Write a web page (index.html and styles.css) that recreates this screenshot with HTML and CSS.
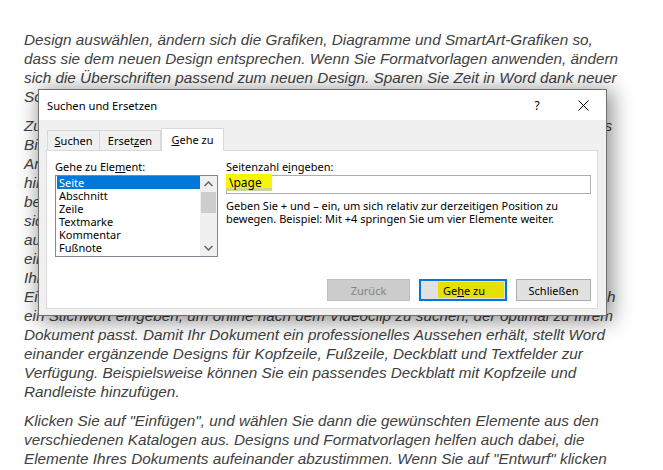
FILE: index.html
```html
<!DOCTYPE html>
<html lang="de">
<head>
<meta charset="utf-8">
<title>Suchen und Ersetzen</title>
<link rel="stylesheet" href="styles.css">
</head>
<body>
<div class="doc">
  <p>Design auswählen, ändern sich die Grafiken, Diagramme und SmartArt-Grafiken so,<br>dass sie dem neuen Design entsprechen. Wenn Sie Formatvorlagen anwenden, ändern<br>sich die Überschriften passend zum neuen Design. Sparen Sie Zeit in Word dank neuer<br>Schaltflächen, die angezeigt werden, wo Sie sie benötigen.</p>
  <p>Zum Ändern der Weise, in der sich ein Bild in Ihr Dokument einfügt, klicken Sie auf das<br>Bild. Dann wird eine Schaltfläche für Layoutoptionen neben dem Bild angezeigt. Beim<br>Arbeiten an einer Tabelle klicken Sie an die Position, an der Sie eine Zeile oder Spalte<br>hinzufügen möchten, und klicken Sie dann auf das Pluszeichen. Auch das Lesen ist<br>bequemer in der neuen Leseansicht. Sie können Teile des Dokuments reduzieren und<br>sich auf den gewünschten Text konzentrieren. Wenn Sie vor dem Ende zu lesen<br>aufhören müssen, merkt sich Word die Stelle, bis zu der Sie gelangt sind – sogar auf<br>einem anderen Gerät. Video bietet eine leistungsstarke Möglichkeit zur Unterstützung<br>Ihres Standpunkts. Wenn Sie auf "Onlinevideo" klicken, können Sie den<br>Einbettungscode für das Video einfügen, das hinzugefügt werden soll. Sie können auch<br>ein Stichwort eingeben, um online nach dem Videoclip zu suchen, der optimal zu Ihrem<br>Dokument passt. Damit Ihr Dokument ein professionelles Aussehen erhält, stellt Word<br>einander ergänzende Designs für Kopfzeile, Fußzeile, Deckblatt und Textfelder zur<br>Verfügung. Beispielsweise können Sie ein passendes Deckblatt mit Kopfzeile und<br>Randleiste hinzufügen.</p>
  <p>Klicken Sie auf "Einfügen", und wählen Sie dann die gewünschten Elemente aus den<br>verschiedenen Katalogen aus. Designs und Formatvorlagen helfen auch dabei, die<br>Elemente Ihres Dokuments aufeinander abzustimmen. Wenn Sie auf "Entwurf" klicken</p>
</div>

<div class="dialog">
  <div class="titlebar">
    <span class="title">Suchen und Ersetzen</span>
    <span class="help">?</span>
    <svg class="close" width="11" height="11" viewBox="0 0 11 11"><path d="M0.5 0.5 L10.5 10.5 M10.5 0.5 L0.5 10.5" stroke="#000" stroke-width="1" fill="none"/></svg>
  </div>
  <div class="body">
    <div class="tabs">
      <div class="tab tab-suchen"><u>S</u>uchen</div>
      <div class="tab tab-ersetzen">Erset<u>z</u>en</div>
      <div class="tab tab-active"><u>G</u>ehe zu</div>
    </div>
    <div class="panel">
      <div class="fields">
        <div class="col-left">
          <div class="label">Gehe zu Ele<u>m</u>ent:</div>
          <div class="listbox">
            <ul class="items">
              <li class="selected">Seite</li>
              <li>Abschnitt</li>
              <li>Zeile</li>
              <li>Textmarke</li>
              <li>Kommentar</li>
              <li>Fußnote</li>
            </ul>
            <div class="scrollbar">
              <svg class="arrow" width="17" height="16" viewBox="0 0 17 16"><path d="M4.5 10 L8.5 6 L12.5 10" stroke="#606060" stroke-width="1.4" fill="none"/></svg>
              <div class="thumb"></div>
              <div class="track"></div>
              <svg class="arrow" width="17" height="16" viewBox="0 0 17 16"><path d="M4.5 6 L8.5 10 L12.5 6" stroke="#606060" stroke-width="1.4" fill="none"/></svg>
            </div>
          </div>
        </div>
        <div class="col-right">
          <div class="label">Seitenzahl e<u>i</u>ngeben:</div>
          <div class="input"><span class="mark">\page</span></div>
          <p class="hint">Geben Sie + und – ein, um sich relativ zur derzeitigen Position zu<br>bewegen. Beispiel: Mit +4 springen Sie um vier Elemente weiter.</p>
        </div>
      </div>
      <div class="buttons">
        <button class="btn btn-back" disabled>Zurück</button>
        <button class="btn btn-go"><span class="go-mark">Ge<u>h</u>e zu</span></button>
        <button class="btn btn-close">Schließen</button>
      </div>
    </div>
  </div>
</div>
</body>
</html>
```
FILE: styles.css
```css
html, body {
  margin: 0;
  padding: 0;
  background: #ffffff;
}

.doc {
  padding: 30px 0 0 24px;
  font-family: "Liberation Sans", Arial, sans-serif;
  font-style: italic;
  font-size: 15.3px;
  line-height: 19px;
  color: #404040;
  white-space: nowrap;
}

.doc p {
  margin: 0 0 10px 0;
}

.dialog {
  position: absolute;
  left: 38px;
  top: 89px;
  width: 569px;
  height: 227px;
  box-sizing: border-box;
  border: 1px solid #6f6f6f;
  background: #f0f0f0;
  box-shadow: 3px 3px 20px 2px rgba(0, 0, 0, 0.45);
  font-family: "Noto Sans", sans-serif;
  font-size: 11px;
  color: #000;
  display: flex;
  flex-direction: column;
}

.titlebar {
  height: 30px;
  flex: none;
  background: #ffffff;
  display: flex;
  align-items: center;
  padding-left: 8px;
}

.title {
  font-size: 11.2px;
  flex: 1;
}

.help {
  font-size: 12px;
  width: 10px;
  text-align: center;
  margin-right: 36px;
}

.close {
  margin-right: 17px;
}

.body {
  flex: 1;
  display: flex;
  flex-direction: column;
  padding: 8px 8px 6px 7px;
}

.tabs {
  display: flex;
  align-items: flex-end;
  padding-left: 1px;
  height: 22px;
}

.tab {
  box-sizing: border-box;
  height: 20px;
  border: 1px solid #d9d9d9;
  border-bottom: none;
  background: #f0f0f0;
  text-align: center;
  line-height: 19px;
  font-size: 11px;
}

.tab-suchen {
  width: 53px;
}

.tab-ersetzen {
  width: 61px;
  border-left: none;
}

.tab-active {
  width: 63px;
  height: 23px;
  background: #ffffff;
  border-left: 1px solid #d9d9d9;
  margin-bottom: -1px;
  position: relative;
  z-index: 1;
  line-height: 21px;
}

.panel {
  flex: 1;
  background: #ffffff;
  border: 1px solid #d9d9d9;
  padding: 9px 6px 7px 8px;
  display: flex;
  flex-direction: column;
}

.fields {
  display: flex;
  gap: 8px;
}

.label {
  line-height: 13px;
  height: 13px;
  margin-bottom: 2px;
}

.col-left {
  width: 163px;
  flex: none;
}

.listbox {
  box-sizing: border-box;
  width: 163px;
  height: 82px;
  border: 1px solid #828790;
  display: flex;
}

.items {
  list-style: none;
  margin: 0;
  padding: 0 0 0 1px;
  flex: 1;
}

.items li {
  height: 13px;
  line-height: 13px;
  padding-left: 2px;
}

.items li.selected {
  background: #0078d7;
  color: #ffffff;
}

.scrollbar {
  width: 17px;
  background: #f0f0f0;
  display: flex;
  flex-direction: column;
}

.arrow {
  display: block;
  flex: none;
}

.thumb {
  height: 21px;
  margin: 0 1px;
  background: #cdcdcd;
  flex: none;
}

.track {
  flex: 1;
}

.col-right {
  flex: 1;
}

.input {
  box-sizing: border-box;
  height: 19px;
  border: 1px solid #adadad;
  position: relative;
}

.mark {
  position: absolute;
  left: -1px;
  top: -2px;
  width: 46px;
  height: 17px;
  box-sizing: border-box;
  padding-left: 3px;
  line-height: 17px;
  font-size: 12px;
  background: linear-gradient(#f6f600 0, #f6f600 80%, #c8d890 80%);
}

.hint {
  margin: 5px 0 0 0;
  line-height: 13px;
  white-space: nowrap;
}

.buttons {
  margin-top: auto;
  display: flex;
  justify-content: flex-end;
  gap: 9px;
}

.btn {
  box-sizing: border-box;
  height: 22px;
  border: 1px solid #adadad;
  background: #e1e1e1;
  font-family: "Noto Sans", sans-serif;
  font-size: 11px;
  color: #000;
  padding: 0;
}

.btn-back {
  width: 83px;
  color: #838383;
  border-color: #bfbfbf;
  background: #cccccc;
}

.btn-go {
  width: 88px;
  border: 2px solid #0078d7;
  display: flex;
  justify-content: flex-end;
  align-items: stretch;
  padding: 1px;
}

.go-mark {
  width: 66px;
  background: #e4e000;
  display: flex;
  align-items: center;
  padding-left: 5px;
  box-sizing: border-box;
}

.btn-close {
  width: 75px;
}
```
